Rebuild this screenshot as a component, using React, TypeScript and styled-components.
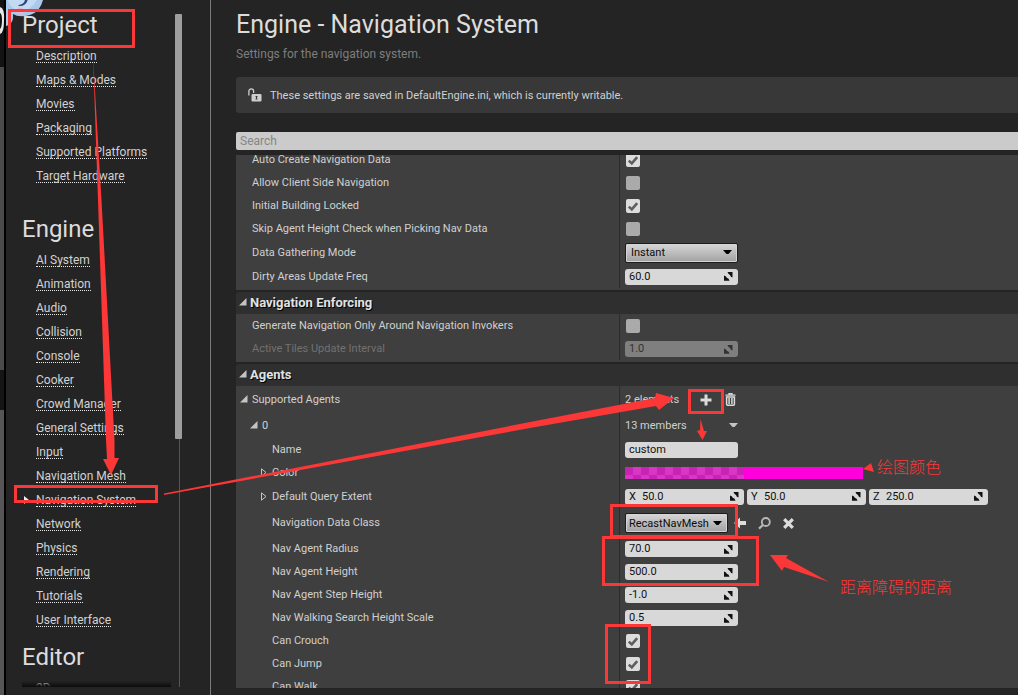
import React from "react";
import styled, { createGlobalStyle, css } from "styled-components";

const RED = "#fb3737";

const GlobalStyle = createGlobalStyle`
  * { box-sizing: border-box; }
  html, body { margin: 0; background: #242424; }
  body, input, select, button { font-family: Roboto, "Noto Sans CJK SC", sans-serif; }
`;

/* ---------- window frame ---------- */

const Window = styled.div`
  position: relative;
  display: flex;
  height: 100vh;
  overflow: hidden;
  background: #242424;
  color: #d0d0d0;
  font-size: 11px;
`;

const BackdropEdge = styled.div`
  flex: 0 0 6px;
  border-right: 2px solid #000;
  background: linear-gradient(
    #141314 0 67px,
    #4b494b 67px 370px,
    #161416 370px 410px,
    #575557 410px
  );
`;

/* ---------- sidebar ---------- */

const Sidebar = styled.nav`
  display: flex;
  flex: 0 0 205px;
  padding: 6px 28px 8px 16px;
  border-right: 1px solid #7c7c7c;
`;

const SectionList = styled.div`
  position: relative;
  flex: 1;
  overflow: hidden;
  &::after {
    content: "";
    position: absolute;
    inset: auto 4px 0 0;
    height: 6px;
    background: linear-gradient(transparent, #0c0c0c);
  }
`;

const Section = styled.section<{ $gap: number }>`
  margin-bottom: ${(p) => p.$gap}px;
`;

const SectionTitle = styled.h2`
  margin: 0;
  font-size: 24px;
  font-weight: 400;
  line-height: 38px;
  color: #dcdcdc;
`;

const LinkList = styled.ul`
  margin: 0;
  padding: 0;
  list-style: none;
`;

const LinkRow = styled.li<{ $current?: boolean }>`
  position: relative;
  display: flex;
  align-items: center;
  height: 24px;
  padding-left: 14px;
  white-space: nowrap;
  ${(p) =>
    p.$current &&
    css`
      &::before {
        content: "";
        position: absolute;
        left: 2px;
        border: 4px solid transparent;
        border-left: 5px solid #eee;
        border-right: 0;
      }
    `}
`;

const SectionLink = styled.a`
  height: 14px;
  border-bottom: 1px dotted #e8e8e8;
  color: #d2d2d2;
  font-size: 12px;
  line-height: 14px;
  text-decoration: none;
`;

const ScrollTrack = styled.div`
  flex: 0 0 7px;
  margin: 8px 0 0;
  background: linear-gradient(#555, #555) 4px 0 / 1px 100% no-repeat;
`;

const ScrollThumb = styled.div`
  height: 425px;
  border-radius: 1px;
  background: #9e9e9e;
`;

/* ---------- main column ---------- */

const Main = styled.main`
  display: flex;
  flex: 1;
  flex-direction: column;
  min-width: 0;
  padding: 6px 0 7px 25px;
`;

const Title = styled.h1`
  margin: 0;
  font-size: 25px;
  font-weight: 400;
  line-height: 38px;
  color: #dcdcdc;
`;

const Subtitle = styled.p`
  margin: 0 0 13px;
  color: #7e7e7e;
  font-size: 12px;
  line-height: 20px;
`;

const Banner = styled.div`
  display: flex;
  flex: 0 0 36px;
  align-items: center;
  gap: 8px;
  margin-bottom: 19px;
  padding-left: 12px;
  border-radius: 3px 0 0 3px;
  background: #383838;
`;

const SearchBox = styled.input`
  flex: 0 0 18px;
  width: 100%;
  height: 18px;
  margin: 0 0 5px;
  padding: 0 4px;
  border: 0;
  border-radius: 2px 0 0 2px;
  background: #cbcbcb;
  font-size: 12px;
  &::placeholder { color: #868686; }
`;

const Details = styled.div`
  flex: 1;
  min-height: 0;
  overflow: hidden;
`;

const DetailsScroll = styled.div`
  margin-top: -7px;
`;

const Group = styled.div`
  margin-bottom: 2px;
`;

const GroupHeader = styled.h3`
  display: flex;
  align-items: center;
  gap: 3px;
  height: 22px;
  margin: 0;
  padding: 0 0 2px 3px;
  border-radius: 3px 0 0 0;
  background: #2f2f2f;
  color: #e2e2e2;
  font-size: 13px;
  font-weight: 700;
  text-shadow: 1px 1px 0 #000;
`;

const GroupBody = styled.div`
  padding-bottom: 2px;
  background: #3f3f3f;
`;

const Row = styled.div<{ $height: number; $dim?: boolean }>`
  display: flex;
  height: ${(p) => p.$height}px;
  color: ${(p) => (p.$dim ? "#717171" : "#d0d0d0")};
`;

const LabelCell = styled.div<{ $depth: number }>`
  display: flex;
  flex: 0 0 384px;
  align-items: center;
  padding-left: ${(p) => 4 + p.$depth * 10}px;
  border-right: 1px solid #2b2b2b;
  white-space: nowrap;
`;

const TwistySlot = styled.span`
  display: flex;
  flex: 0 0 12px;
`;

const ValueCell = styled.div`
  display: flex;
  flex: 1;
  align-items: center;
  gap: 3px;
  min-width: 0;
  padding: 1px 0 0 5px;
`;

/* ---------- controls ---------- */

const Field = styled.span<{ $width: number; $dim?: boolean }>`
  display: flex;
  flex: none;
  align-items: center;
  width: ${(p) => p.$width}px;
  height: 16px;
  padding: 0 5px 0 4px;
  border-radius: 3px;
  background: ${(p) => (p.$dim ? "#7f7f7f" : "#d8d8d8")};
  color: ${(p) => (p.$dim ? "#333" : "#111")};
`;

const Axis = styled.span`
  flex: 0 0 13px;
`;

const FieldInput = styled.input`
  flex: 1;
  width: 0;
  min-width: 0;
  height: 16px;
  padding: 0;
  border: 0;
  background: none;
  color: inherit;
  font-size: 11px;
  line-height: 16px;
  outline: none;
`;

const CheckWrap = styled.span`
  display: grid;
  margin-left: 1px;
  > * { grid-area: 1 / 1; }
  svg { pointer-events: none; }
`;

const CheckInput = styled.input`
  appearance: none;
  width: 14px;
  height: 14px;
  margin: 0;
  border-radius: 2px;
  background: #aaa;
  &:checked { background: #dcdcdc; }
`;

const SelectWrap = styled.span<{ $width: number }>`
  display: grid;
  flex: 0 0 ${(p) => p.$width}px;
  align-items: center;
  > * { grid-area: 1 / 1; }
  svg { justify-self: end; margin-right: 6px; pointer-events: none; }
`;

const SelectInput = styled.select<{ $inset: number }>`
  appearance: none;
  width: 100%;
  height: 20px;
  padding: 0 0 0 ${(p) => p.$inset}px;
  border: 1px solid #1c1c1c;
  border-radius: 2px;
  background: linear-gradient(#d6d6d6, #bcbcbc 50%, #a2a2a2);
  box-shadow: inset 0 0 0 1px #d4d4d4;
  color: #0c0c0c;
  font-size: 11px;
`;

const IconButton = styled.button<{ $width: number }>`
  display: grid;
  flex: 0 0 ${(p) => p.$width}px;
  place-items: center;
  height: 16px;
  padding: 0;
  border: 0;
  background: none;
  color: #dcdcdc;
`;

const ValueText = styled.span<{ $width: number }>`
  flex: 0 0 ${(p) => p.$width}px;
`;

const ColorSwatch = styled.button`
  display: grid;
  flex: 0 0 238px;
  grid-template-columns: 1fr 1fr;
  height: 12px;
  padding: 0;
  border: 0;
  background: #ff00dc;
`;

const TransparentHalf = styled.span`
  height: 12px;
  background: conic-gradient(#da36c5 25%, #cb22b6 0 50%, #da36c5 0 75%, #cb22b6 0) 0 0 / 16px 16px;
`;

/* ---------- annotations drawn over the panel ---------- */

const Overlay = styled.svg`
  position: absolute;
  top: 0;
  left: 0;
  pointer-events: none;
`;

const Mark = styled.div<{ $x: number; $y: number; $w: number; $h: number }>`
  position: absolute;
  left: ${(p) => p.$x}px;
  top: ${(p) => p.$y}px;
  width: ${(p) => p.$w}px;
  height: ${(p) => p.$h}px;
  border: 3px solid ${RED};
  pointer-events: none;
`;

const Note = styled.span<{ $x: number; $y: number }>`
  position: absolute;
  left: ${(p) => p.$x}px;
  top: ${(p) => p.$y}px;
  color: ${RED};
  font: 300 16px/20px "Noto Sans CJK SC", sans-serif;
  white-space: nowrap;
`;

/* ---------- icons ---------- */

const OpenTwisty = () => (
  <svg width="8" height="8" viewBox="0 0 8 8"><path d="M0 7.5 7.5 0V7.5Z" fill="#c4c4c4" /></svg>
);

const ClosedTwisty = () => (
  <svg width="8" height="9" viewBox="0 0 8 9"><path d="M1.5.8V8.2L6 4.5Z" fill="none" stroke="#c4c4c4" /></svg>
);

const Caret = () => (
  <svg width="9" height="5" viewBox="0 0 9 5"><path d="M0 0H9L5.5 4h-2Z" fill="#c4c4c4" /></svg>
);

const SpinIcon = () => (
  <svg width="9" height="9" viewBox="0 0 9 9"><path d="M3.500 0H8.500V5.500Q6.500 5.200 6 3 4 2 3.500 0ZM0 3.500Q2 4 2.800 5.800 5 6.500 5.500 8.800H0Z" fill="currentColor" /></svg>
);

const UnlockIcon = () => (
  <svg width="14" height="14" viewBox="0 0 14 14">
    <path d="M.9 7.5V3.2C.9 0 5.6 0 5.6 3.2V5" fill="none" stroke="#cfcfcf" strokeWidth="1.3" />
    <rect x="3.5" y="6" width="10" height="7.5" rx="1" fill="#cfcfcf" />
    <path d="M7.5 8h2v1h-.5v1.5h.5v1h-2v-1H8V9h-.5z" fill="#383838" />
  </svg>
);

const PlusIcon = () => (
  <svg width="12" height="12" viewBox="0 0 12 12"><path d="M6 .5v11M.5 6h11" stroke="currentColor" strokeWidth="3" /></svg>
);

const TrashIcon = () => (
  <svg width="11" height="13" viewBox="0 0 11 13">
    <path d="M4 1.4V.6h3v.8M.5 2.2h10" fill="none" stroke="currentColor" strokeWidth="1.3" />
    <path d="M1.6 4h7.8v7.3q0 .9-.9.9h-6q-.9 0-.9-.9zM4.1 5v6M6.9 5v6" fill="none" stroke="currentColor" strokeWidth="1.5" />
  </svg>
);

const ArrowIcon = () => (
  <svg width="12" height="12" viewBox="0 0 12 12"><path d="M0 6 6 .5V4h6v4H6v3.5Z" fill="currentColor" /></svg>
);

const MagnifierIcon = () => (
  <svg width="13" height="13" viewBox="0 0 13 13">
    <circle cx="7.8" cy="5" r="4" fill="none" stroke="#b8b8b8" strokeWidth="1.8" />
    <path d="M4.9 8 1 11.600" stroke="#b8b8b8" strokeWidth="2.2" />
  </svg>
);

const CrossIcon = () => (
  <svg width="11" height="11" viewBox="0 0 11 11"><path d="m1.2 1.2 8.6 8.6M9.8 1.2 1.2 9.8" stroke="currentColor" strokeWidth="3.2" /></svg>
);

/* ---------- composed controls ---------- */

type FieldProps = { id: string; value: string; axis?: string; width?: number; plain?: boolean; dim?: boolean; label?: string };

const ValueField = ({ id, value, axis, width = 113, plain, dim, label }: FieldProps) => (
  <Field $width={width} $dim={dim}>
    {axis && <Axis>{axis}</Axis>}
    <FieldInput id={id} defaultValue={value} disabled={dim} aria-label={label} />
    {!plain && <SpinIcon />}
  </Field>
);

const Check = ({ id, on }: { id: string; on?: boolean }) => (
  <CheckWrap>
    <CheckInput type="checkbox" id={id} defaultChecked={on} />
    {on && (
      <svg width="14" height="14" viewBox="0 0 14 14">
        <path d="m2.8 7.6 3 2.8 5.4-6.2" fill="none" stroke="#5e5e5e" strokeWidth="2.6" />
      </svg>
    )}
  </CheckWrap>
);

const Dropdown = ({ id, value, width, inset }: { id: string; value: string; width: number; inset: number }) => (
  <SelectWrap $width={width}>
    <SelectInput id={id} $inset={inset} defaultValue={value}>
      <option>{value}</option>
    </SelectInput>
    <svg width="9" height="5" viewBox="0 0 9 5"><path d="M0 0H9L5.5 4h-2Z" fill="#000" /></svg>
  </SelectWrap>
);

type PropertyProps = {
  label: string;
  id?: string;
  height?: number;
  depth?: number;
  twisty?: "open" | "closed";
  dim?: boolean;
  children: React.ReactNode;
};

const Property = ({ label, id, height = 23, depth = 0, twisty, dim, children }: PropertyProps) => (
  <Row $height={height} $dim={dim}>
    <LabelCell $depth={depth}>
      <TwistySlot>
        {twisty === "open" && <OpenTwisty />}
        {twisty === "closed" && <ClosedTwisty />}
      </TwistySlot>
      {id ? <label htmlFor={id}>{label}</label> : <span>{label}</span>}
    </LabelCell>
    <ValueCell>{children}</ValueCell>
  </Row>
);

const sections = [
  { title: "Project", gap: 22, links: ["Description", "Maps & Modes", "Movies", "Packaging", "Supported Platforms", "Target Hardware"] },
  {
    title: "Engine",
    gap: 6,
    links: [
      "AI System", "Animation", "Audio", "Collision", "Console", "Cooker", "Crowd Manager", "General Settings",
      "Input", "Navigation Mesh", "Navigation System", "Network", "Physics", "Rendering", "Tutorials", "User Interface",
    ],
  },
  { title: "Editor", gap: 0, links: ["2D"] },
];

export default function App() {
  return (
    <Window>
      <GlobalStyle />
      <BackdropEdge />
      <Sidebar>
        <SectionList>
          {sections.map((s) => (
            <Section key={s.title} $gap={s.gap}>
              <SectionTitle>{s.title}</SectionTitle>
              <LinkList>
                {s.links.map((l) => (
                  <LinkRow key={l} $current={l === "Navigation System"}>
                    <SectionLink href="#">{l}</SectionLink>
                  </LinkRow>
                ))}
              </LinkList>
            </Section>
          ))}
        </SectionList>
        <ScrollTrack><ScrollThumb /></ScrollTrack>
      </Sidebar>

      <Main>
        <Title>Engine - Navigation System</Title>
        <Subtitle>Settings for the navigation system.</Subtitle>
        <Banner>
          <UnlockIcon />
          <span>These settings are saved in DefaultEngine.ini, which is currently writable.</span>
        </Banner>
        <SearchBox placeholder="Search" aria-label="Search" />

        <Details>
          <DetailsScroll>
            <Group>
              <GroupBody>
                <Property label="Auto Create Navigation Data" id="autoCreate"><Check id="autoCreate" on /></Property>
                <Property label="Allow Client Side Navigation" id="clientSide"><Check id="clientSide" /></Property>
                <Property label="Initial Building Locked" id="locked"><Check id="locked" on /></Property>
                <Property label="Skip Agent Height Check when Picking Nav Data" id="skip"><Check id="skip" /></Property>
                <Property label="Data Gathering Mode" id="gathering" height={24}>
                  <Dropdown id="gathering" value="Instant" width={113} inset={5} />
                </Property>
                <Property label="Dirty Areas Update Freq" id="freq" height={24}><ValueField id="freq" value="60.0" /></Property>
              </GroupBody>
            </Group>

            <Group>
              <GroupHeader><OpenTwisty />Navigation Enforcing</GroupHeader>
              <GroupBody>
                <Property label="Generate Navigation Only Around Navigation Invokers" id="invokers"><Check id="invokers" /></Property>
                <Property label="Active Tiles Update Interval" id="interval" dim><ValueField id="interval" value="1.0" dim /></Property>
              </GroupBody>
            </Group>

            <Group>
              <GroupHeader><OpenTwisty />Agents</GroupHeader>
              <GroupBody>
                <Property label="Supported Agents" height={26} twisty="open">
                  <ValueText $width={69}>2 elements</ValueText>
                  <IconButton $width={17} aria-label="Add element"><PlusIcon /></IconButton>
                  <IconButton $width={26} aria-label="Remove all elements"><TrashIcon /></IconButton>
                </Property>
                <Property label="0" height={26} depth={1} twisty="open">
                  <ValueText $width={97}>13 members</ValueText>
                  <IconButton $width={17} aria-label="Element options"><Caret /></IconButton>
                </Property>
                <Property label="Name" id="name" depth={2}><ValueField id="name" value="custom" plain /></Property>
                <Property label="Color" depth={2} twisty="closed">
                  <ColorSwatch aria-label="Color"><TransparentHalf /></ColorSwatch>
                </Property>
                <Property label="Default Query Extent" height={24} depth={2} twisty="closed">
                  <ValueField id="extentX" axis="X" value="50.0" width={119} label="Extent X" />
                  <ValueField id="extentY" axis="Y" value="50.0" width={119} label="Extent Y" />
                  <ValueField id="extentZ" axis="Z" value="250.0" width={119} label="Extent Z" />
                </Property>
                <Property label="Navigation Data Class" id="dataClass" height={29} depth={2}>
                  <Dropdown id="dataClass" value="RecastNavMesh" width={103} inset={3} />
                  <IconButton $width={18} aria-label="Use selected"><ArrowIcon /></IconButton>
                  <IconButton $width={24} aria-label="Browse"><MagnifierIcon /></IconButton>
                  <IconButton $width={18} aria-label="Clear"><CrossIcon /></IconButton>
                </Property>
                <Property label="Nav Agent Radius" id="radius" depth={2}><ValueField id="radius" value="70.0" /></Property>
                <Property label="Nav Agent Height" id="height" depth={2}><ValueField id="height" value="500.0" /></Property>
                <Property label="Nav Agent Step Height" id="step" depth={2}><ValueField id="step" value="-1.0" /></Property>
                <Property label="Nav Walking Search Height Scale" id="scale" depth={2}><ValueField id="scale" value="0.5" /></Property>
                <Property label="Can Crouch" id="crouch" depth={2}><Check id="crouch" on /></Property>
                <Property label="Can Jump" id="jump" depth={2}><Check id="jump" on /></Property>
                <Property label="Can Walk" id="walk" depth={2}><Check id="walk" on /></Property>
              </GroupBody>
            </Group>
          </DetailsScroll>
        </Details>
      </Main>

      <Overlay width="1018" height="695" viewBox="0 0 1018 695">
        <path d="M0 7Q5 8 4 21 4 33 0 34Z" fill="#e6e6e6" />
        <path d="M0 13q2 1 2 7 0 7-2 9z" fill="#111" />
        <path d="M6 0H43Q40 12 30 15 19 18 13 14 14 24 6 26Z" fill="#a9c9ea" />
        <path d="M8 0q1 7 10 11Q29 13 37 0Z" fill="#c3daf2" />
        <path d="M19 5Q25 4 25-1h3Q26 7 18 6Z" fill="#28477f" />
        <circle cx="20" cy="11" r="3.5" fill="#dfb9cb" />
        <g fill={RED}>
          <path d="M93 57 101.5 200 114.5 440V458H119L111 475 103 459H107L106 440 98 200Z" />
          <path d="M164 493.500 530 422 655 398 656 393 674 398 659 410 656 406 530 428 164 495Z" />
          <path d="M700.5 419 704 431H707L702.5 440 697 431 700 430Z" />
          <path d="M863 469 871 463 874 472Z" />
          <path d="M829 582 786 558 788 555H770L782 571 784 567Z" />
        </g>
      </Overlay>
      <Mark $x={8} $y={9} $w={127} $h={39} />
      <Mark $x={14} $y={485} $w={144} $h={18} />
      <Mark $x={688} $y={389} $w={36} $h={25} />
      <Mark $x={610} $y={504} $w={128} $h={34} />
      <Mark $x={602} $y={536} $w={157} $h={50} />
      <Mark $x={605} $y={624} $w={46} $h={60} />
      <Note $x={877} $y={456}>绘图颜色</Note>
      <Note $x={840} $y={576}>距离障碍的距离</Note>
    </Window>
  );
}
